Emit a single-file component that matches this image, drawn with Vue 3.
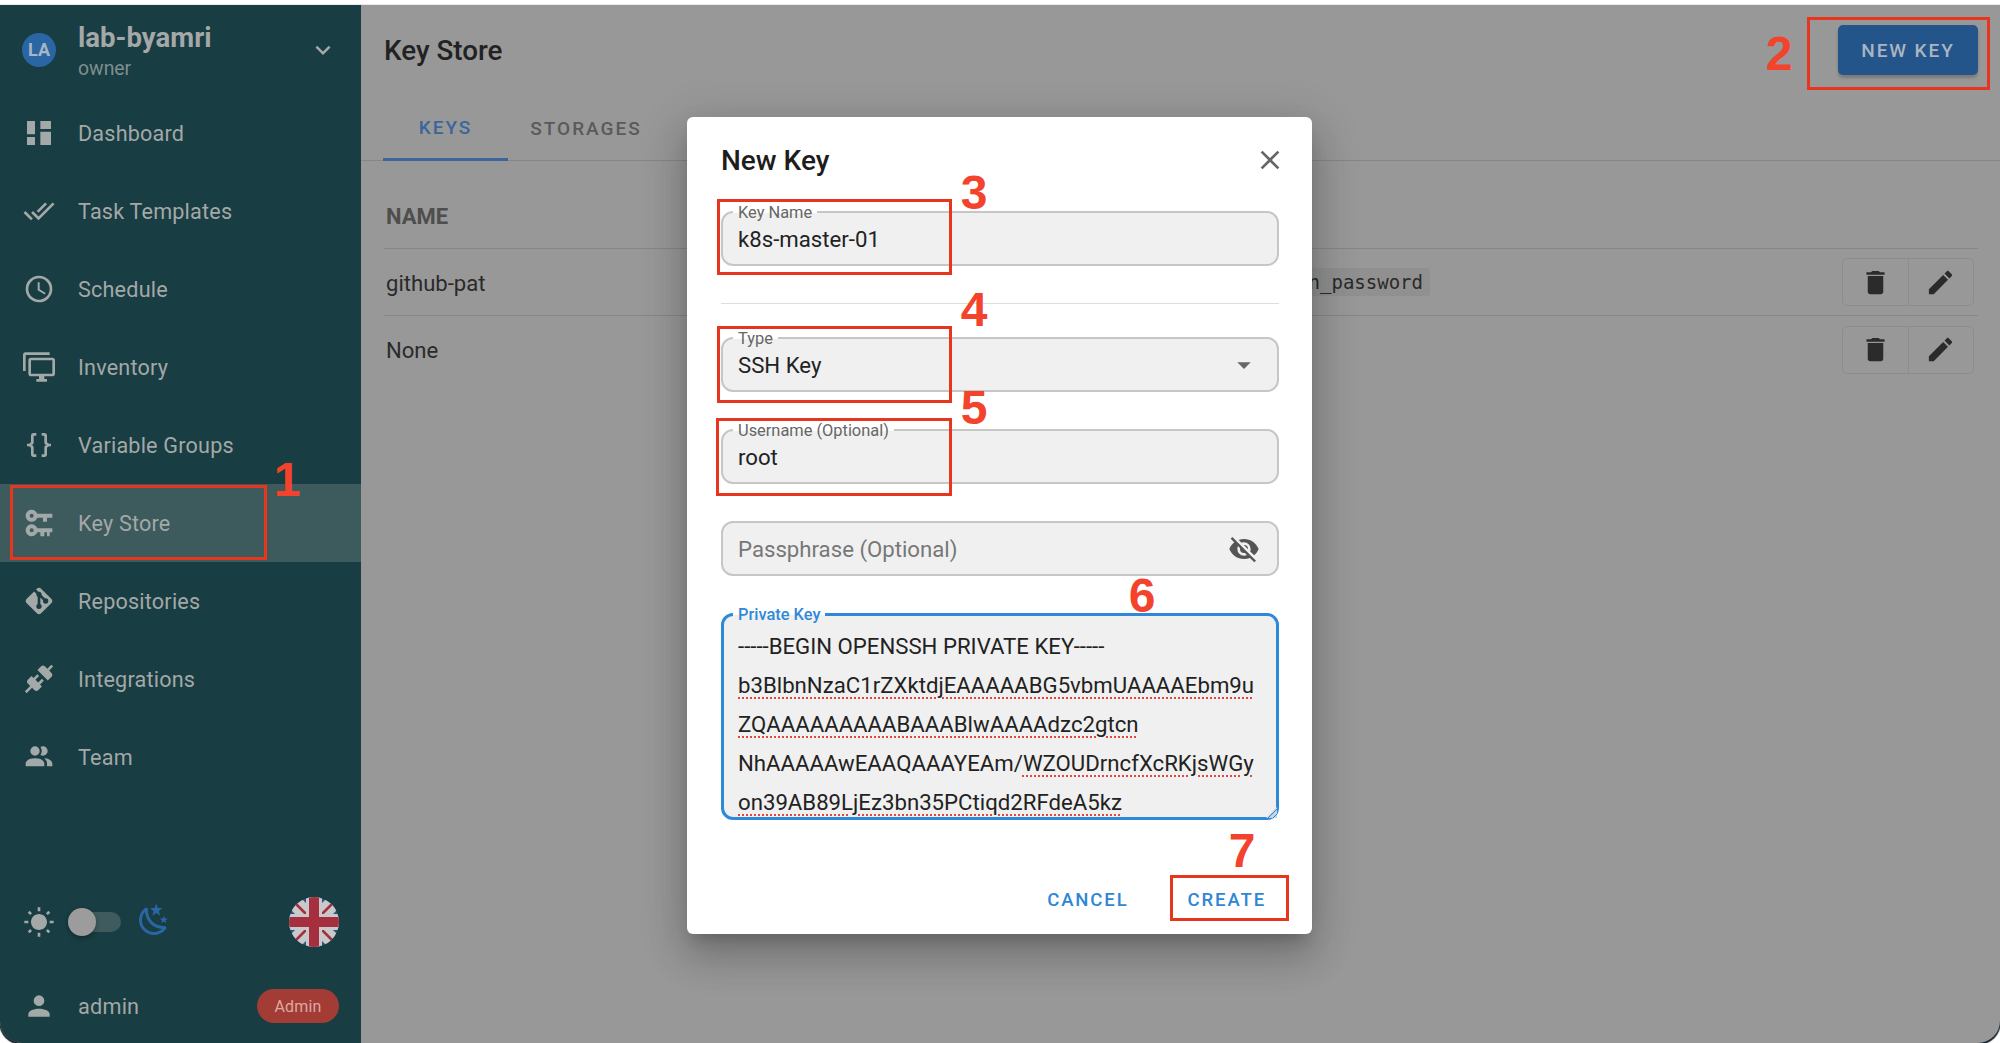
<script setup>
const icons = {
  dashboard: 'M13,3V9H21V3M13,21H21V11H13M3,21H9V15H3M3,13H9V3H3V13Z',
  checkAll: 'M0.41,13.41L6,19L7.41,17.58L1.83,12M22.24,5.58L11.66,16.17L7.5,12L6.07,13.41L11.66,19L23.66,7M18,7L16.59,5.58L10.24,11.93L11.66,13.34L18,7Z',
  clock: 'M12,20A8,8 0 0,0 20,12A8,8 0 0,0 12,4A8,8 0 0,0 4,12A8,8 0 0,0 12,20M12,2A10,10 0 0,1 22,12A10,10 0 0,1 12,22C6.47,22 2,17.5 2,12A10,10 0 0,1 12,2M12.5,7V12.25L17,14.92L16.25,16.15L11,13V7H12.5Z',
  monitors: 'M22,17V7H6V17H22M22,5A2,2 0 0,1 24,7V17C24,18.11 23.1,19 22,19H16V21H18V23H10V21H12V19H6C4.89,19 4,18.11 4,17V7A2,2 0 0,1 6,5H22M2,3V15H0V3A2,2 0 0,1 2,1H20V3H2Z',
  braces: 'M8,3A2,2 0 0,0 6,5V9A2,2 0 0,1 4,11H3V13H4A2,2 0 0,1 6,15V19A2,2 0 0,0 8,21H10V19H8V14A2,2 0 0,0 6,12A2,2 0 0,0 8,10V5H10V3M16,3A2,2 0 0,1 18,5V9A2,2 0 0,0 20,11H21V13H20A2,2 0 0,0 18,15V19A2,2 0 0,1 16,21H14V19H16V14A2,2 0 0,1 18,12A2,2 0 0,1 16,10V5H14V3H16Z',
  keys: 'M6.5,2C8.46,2 10.13,3.25 10.74,5H22V8H18V11H15V8H10.74C10.13,9.75 8.46,11 6.5,11C4,11 2,9 2,6.5C2,4 4,2 6.5,2M6.5,5A1.5,1.5 0 0,0 5,6.5A1.5,1.5 0 0,0 6.5,8A1.5,1.5 0 0,0 8,6.5A1.5,1.5 0 0,0 6.5,5M6.5,13C8.46,13 10.13,14.25 10.74,16H22V19H20V22H18V19H16V22H13V19H10.74C10.13,20.75 8.46,22 6.5,22C4,22 2,20 2,17.5C2,15 4,13 6.5,13M6.5,16A1.5,1.5 0 0,0 5,17.5A1.5,1.5 0 0,0 6.5,19A1.5,1.5 0 0,0 8,17.5A1.5,1.5 0 0,0 6.5,16Z',
  git: 'M2.6,10.59L8.38,4.8L10.07,6.5C9.83,7.35 10.22,8.28 11,8.73V14.27C10.4,14.61 10,15.26 10,16A2,2 0 0,0 12,18A2,2 0 0,0 14,16C14,15.26 13.6,14.61 13,14.27V9.41L15.07,11.5C15,11.65 15,11.82 15,12A2,2 0 0,0 17,14A2,2 0 0,0 19,12A2,2 0 0,0 17,10C16.82,10 16.65,10 16.5,10.07L13.93,7.5C14.19,6.57 13.71,5.55 12.78,5.16C12.35,5 11.9,4.96 11.5,5.07L9.8,3.38L10.59,2.6C11.37,1.81 12.63,1.81 13.41,2.6L21.4,10.59C22.19,11.37 22.19,12.63 21.4,13.41L13.41,21.4C12.63,22.19 11.37,22.19 10.59,21.4L2.6,13.41C1.81,12.63 1.81,11.37 2.6,10.59Z',
  connection: 'M21.4 7.5C22.2 8.3 22.2 9.6 21.4 10.3L18.6 13.1L10.8 5.3L13.6 2.5C14.4 1.7 15.7 1.7 16.4 2.5L18.2 4.3L21.2 1.3L22.6 2.7L19.6 5.7L21.4 7.5M15.6 13.3L14.2 11.9L11.4 14.7L9.3 12.6L12.1 9.8L10.7 8.4L7.9 11.2L6.4 9.8L3.6 12.6C2.8 13.4 2.8 14.7 3.6 15.4L5.4 17.2L1.4 21.2L2.8 22.6L6.8 18.6L8.6 20.4C9.4 21.2 10.7 21.2 11.4 20.4L14.2 17.6L12.8 16.2L15.6 13.3Z',
  team: 'M16 17V19H2V17S2 13 9 13 16 17 16 17M12.5 7.5A3.5 3.5 0 1 0 9 11A3.5 3.5 0 0 0 12.5 7.5M15.94 13A5.32 5.32 0 0 1 18 17V19H22V17S22 13.37 15.94 13M15 4A3.39 3.39 0 0 0 13.07 4.59A5 5 0 0 1 13.07 10.41A3.39 3.39 0 0 0 15 11A3.5 3.5 0 0 0 15 4Z',
  account: 'M12,4A4,4 0 0,1 16,8A4,4 0 0,1 12,12A4,4 0 0,1 8,8A4,4 0 0,1 12,4M12,14C16.42,14 20,15.79 20,18V20H4V18C4,15.79 7.58,14 12,14Z',
  chevron: 'M7.41,8.58L12,13.17L16.59,8.58L18,10L12,16L6,10L7.41,8.58Z',
  close: 'M19,6.41L17.59,5L12,10.59L6.41,5L5,6.41L10.59,12L5,17.59L6.41,19L12,13.41L17.59,19L19,17.59L13.41,12L19,6.41Z',
  menuDown: 'M7,10L12,15L17,10H7Z',
  eyeOff: 'M11.83,9L15,12.16C15,12.11 15,12.05 15,12A3,3 0 0,0 12,9C11.94,9 11.89,9 11.83,9M7.53,9.8L9.08,11.35C9.03,11.56 9,11.77 9,12A3,3 0 0,0 12,15C12.22,15 12.44,14.97 12.65,14.92L14.2,16.47C13.53,16.8 12.79,17 12,17A5,5 0 0,1 7,12C7,11.21 7.2,10.47 7.53,9.8M2,4.27L4.28,6.55L4.73,7C3.08,8.3 1.78,10 1,12C2.73,16.39 7,19.5 12,19.5C13.55,19.5 15.03,19.2 16.38,18.66L16.81,19.08L19.73,22L21,20.73L3.27,3M12,7A5,5 0 0,1 17,12C17,12.64 16.87,13.26 16.64,13.82L19.57,16.75C21.07,15.5 22.27,13.86 23,12C21.27,7.61 17,4.5 12,4.5C10.6,4.5 9.26,4.75 8,5.2L10.17,7.35C10.74,7.13 11.35,7 12,7Z',
  trash: 'M19,4H15.5L14.5,3H9.5L8.5,4H5V6H19M6,19A2,2 0 0,0 8,21H16A2,2 0 0,0 18,19V7H6V19Z',
  pencil: 'M20.71,7.04C21.1,6.65 21.1,6 20.71,5.63L18.37,3.29C18,2.9 17.35,2.9 16.96,3.29L15.12,5.12L18.87,8.87M3,17.25V21H6.75L17.81,9.93L14.06,6.18L3,17.25Z',
  sun: 'M3.55,19.09L4.96,20.5L6.76,18.71L5.34,17.29M12,6C8.69,6 6,8.69 6,12S8.69,18 12,18 18,15.31 18,12C18,8.68 15.31,6 12,6M20,13H23V11H20M17.24,18.71L19.04,20.5L20.45,19.09L18.66,17.29M20.45,5L19.04,3.6L17.24,5.39L18.66,6.81M13,1H11V4H13M6.76,5.39L4.96,3.6L3.55,5L5.34,6.81L6.76,5.39M1,13H4V11H1M13,20H11V23H13',
  moon: 'M17.75,4.09L15.22,6.03L16.13,9.09L13.5,7.28L10.87,9.09L11.78,6.03L9.25,4.09L12.44,4L13.5,1L14.56,4L17.75,4.09M21.25,11L19.61,12.25L20.2,14.23L18.5,13.06L16.8,14.23L17.39,12.25L15.75,11L17.81,10.95L18.5,9L19.19,10.95L21.25,11M18.97,15.95C19.8,15.87 20.69,17.05 20.16,17.8C19.84,18.25 19.5,18.67 19.08,19.07C15.17,23 8.84,23 4.94,19.07C1.03,15.17 1.03,8.83 4.94,4.93C5.34,4.53 5.76,4.17 6.21,3.85C6.96,3.32 8.14,4.21 8.06,5.04C7.79,7.9 8.75,10.87 10.95,13.06C13.14,15.26 16.1,16.22 18.97,15.95M17.33,17.97C14.5,17.81 11.7,16.64 9.53,14.5C7.36,12.31 6.2,9.5 6.04,6.68C3.23,9.82 3.34,14.64 6.35,17.66C9.37,20.67 14.19,20.78 17.33,17.97Z'
}

const nav = [
  { label: 'Dashboard', icon: icons.dashboard },
  { label: 'Task Templates', icon: icons.checkAll },
  { label: 'Schedule', icon: icons.clock },
  { label: 'Inventory', icon: icons.monitors },
  { label: 'Variable Groups', icon: icons.braces },
  { label: 'Key Store', icon: icons.keys, active: true },
  { label: 'Repositories', icon: icons.git },
  { label: 'Integrations', icon: icons.connection },
  { label: 'Team', icon: icons.team }
]

const rows = [
  { name: 'github-pat', code: 'login_password' },
  { name: 'None', code: '' }
]

const keyLines = [
  [{ t: '-----BEGIN OPENSSH PRIVATE KEY-----' }],
  [{ t: 'b3BlbnNzaC1rZXktdjEAAAAABG5vbmUAAAAEbm9u', bad: true }],
  [{ t: 'ZQAAAAAAAAABAAABlwAAAAdzc2gtcn', bad: true }],
  [{ t: 'NhAAAAAwEAAQAAAYEAm/' }, { t: 'WZOUDrncfXcRKjsWGy', bad: true }],
  [{ t: 'on39AB89LjEz3bn35PCtiqd2RFdeA5kz', bad: true }]
]

const boxes = ['b1', 'b2', 'b3', 'b4', 'b5', 'b7']
const digits = [
  { n: 1, c: 'd1' }, { n: 2, c: 'd2' }, { n: 3, c: 'd3' }, { n: 4, c: 'd4' },
  { n: 5, c: 'd5' }, { n: 6, c: 'd6' }, { n: 7, c: 'd7' }
]
</script>

<template>
  <div class="page">
    <div class="window">
      <aside class="sidebar">
        <header class="project">
          <span class="avatar">LA</span>
          <div class="project-text">
            <div class="project-name">lab-byamri</div>
            <div class="project-role">owner</div>
          </div>
          <svg class="ic chevron" viewBox="0 0 24 24"><path :d="icons.chevron" /></svg>
        </header>

        <nav class="nav">
          <a v-for="item in nav" :key="item.label" class="nav-item" :class="{ active: item.active }">
            <svg class="ic nav-ic" viewBox="0 0 24 24"><path :d="item.icon" /></svg>
            <span>{{ item.label }}</span>
          </a>
        </nav>

        <div class="foot">
          <div class="theme-row">
            <svg class="ic sun" viewBox="0 0 24 24"><path :d="icons.sun" /></svg>
            <span class="switch"><span class="thumb"></span></span>
            <svg class="ic moon" viewBox="0 0 24 24"><path :d="icons.moon" /></svg>
            <svg class="flag" viewBox="0 0 50 50">
              <defs><clipPath id="flagclip"><circle cx="25" cy="25" r="25" /></clipPath></defs>
              <g clip-path="url(#flagclip)">
                <rect width="50" height="50" fill="#2d5290" />
                <path d="M0 6L44 50M6 0L50 44M50 6L6 50M44 0L0 44" stroke="#c9c9c9" stroke-width="7" />
                <path d="M3 3L47 47M47 3L3 47" stroke="#a52f3f" stroke-width="2.5" />
                <rect x="0" y="17" width="50" height="16" fill="#c9c9c9" />
                <rect x="17" y="0" width="16" height="50" fill="#c9c9c9" />
                <rect x="0" y="20" width="50" height="10" fill="#a52f3f" />
                <rect x="20" y="0" width="10" height="50" fill="#a52f3f" />
              </g>
            </svg>
          </div>
          <div class="user-row">
            <svg class="ic nav-ic" viewBox="0 0 24 24"><path :d="icons.account" /></svg>
            <span class="user-name">admin</span>
            <span class="badge">Admin</span>
          </div>
        </div>
      </aside>

      <main class="main">
        <header class="topbar">
          <h1 class="title">Key Store</h1>
          <button class="new-key">NEW KEY</button>
        </header>

        <div class="tabs">
          <span class="tab on">KEYS</span>
          <span class="tab">STORAGES</span>
        </div>

        <section class="table">
          <div class="thead">NAME</div>
          <div v-for="row in rows" :key="row.name" class="trow">
            <span class="tname">{{ row.name }}</span>
            <code v-if="row.code" class="tcode">{{ row.code }}</code>
            <div class="actions">
              <span class="act"><svg class="ic act-ic" viewBox="0 0 24 24"><path :d="icons.trash" /></svg></span>
              <span class="act"><svg class="ic act-ic" viewBox="0 0 24 24"><path :d="icons.pencil" /></svg></span>
            </div>
          </div>
        </section>
      </main>

      <div class="dialog">
        <div class="dlg-head">
          <h2 class="dlg-title">New Key</h2>
          <svg class="ic dlg-close" viewBox="0 0 24 24"><path :d="icons.close" /></svg>
        </div>

        <div class="form">
          <div class="field">
            <label class="flabel">Key Name</label>
            <span class="fvalue">k8s-master-01</span>
          </div>
          <hr class="divider" />
          <div class="field">
            <label class="flabel">Type</label>
            <span class="fvalue">SSH Key</span>
            <svg class="ic fend arrow" viewBox="0 0 24 24"><path :d="icons.menuDown" /></svg>
          </div>
          <div class="field">
            <label class="flabel">Username (Optional)</label>
            <span class="fvalue">root</span>
          </div>
          <div class="field">
            <span class="fvalue placeholder">Passphrase (Optional)</span>
            <svg class="ic fend eye" viewBox="0 0 24 24"><path :d="icons.eyeOff" /></svg>
          </div>
          <div class="field area">
            <label class="flabel blue">Private Key</label>
            <div class="area-text">
              <div v-for="(line, i) in keyLines" :key="i" class="area-line">
                <span v-for="(part, j) in line" :key="j" :class="{ bad: part.bad }">{{ part.t }}</span>
              </div>
            </div>
            <svg class="grip" viewBox="0 0 12 12">
              <path d="M12 1L1 12H12Z" fill="#bcd6ee" />
              <path d="M12 3L3 12M12 8L8 12" stroke="#4d7fae" stroke-width="1" />
            </svg>
          </div>
        </div>

        <div class="dlg-actions">
          <button class="text-btn">CANCEL</button>
          <button class="text-btn">CREATE</button>
        </div>
      </div>
    </div>

    <div class="notes">
      <span v-for="b in boxes" :key="b" class="box" :class="b"></span>
      <span v-for="d in digits" :key="d.n" class="digit" :class="d.c">{{ d.n }}</span>
    </div>
  </div>
</template>

<style>
html, body { margin: 0; background: #fff; }
</style>

<style scoped>
.page {
  position: relative;
  width: 2000px;
  height: 1043px;
  padding-top: 5px;
  box-sizing: border-box;
  overflow: hidden;
  background: #fff;
  font-family: Roboto, "Liberation Sans", sans-serif;
}
.window {
  position: relative;
  display: flex;
  height: 1038px;
  background: #989898;
  border-radius: 0 0 22px 22px;
  box-shadow: 0 1px 1px 1px #15212a;
  overflow: hidden;
}
.ic { display: block; fill: currentColor; flex: none; }

.sidebar {
  width: 361px;
  flex: none;
  display: flex;
  flex-direction: column;
  background: #183d42;
  color: #a3a8a8;
}
.project {
  height: 89px;
  flex: none;
  display: flex;
  align-items: center;
  padding: 0 23px 0 22px;
  box-sizing: border-box;
}
.avatar {
  width: 34px;
  height: 34px;
  border-radius: 50%;
  background: #2a66a3;
  color: #a5b6c6;
  font-size: 18px;
  font-weight: 700;
  display: flex;
  align-items: center;
  justify-content: center;
  flex: none;
}
.project-text { flex: 1; margin-left: 22px; padding-top: 4px; }
.project-name {
  font-size: 27.6px;
  font-weight: 700;
  line-height: 32px;
  color: #a4a8a8;
  margin-top: -1px;
}
.project-role { font-size: 19.4px; line-height: 24px; color: #7e8f91; margin-top: 3px; }
.chevron { width: 30px; height: 30px; color: #a3a8a8; }

.nav { flex: 1; }
.nav-item {
  height: 78px;
  display: flex;
  align-items: center;
  gap: 23px;
  padding-left: 23px;
  font-size: 21.6px;
  letter-spacing: 0.2px;
}
.nav-item.active { background: #3d5a5d; }
.nav-ic { width: 32px; height: 32px; color: #a3a8a8; }

.foot { flex: none; padding-bottom: 3px; }
.theme-row {
  height: 68px;
  display: flex;
  align-items: center;
  padding: 0 22px 0 23px;
  margin-bottom: 16px;
}
.sun { width: 32px; height: 32px; }
.switch {
  position: relative;
  width: 46px;
  height: 20px;
  margin-left: 20px;
  border-radius: 10px;
  background: #3f5b5e;
}
.thumb {
  position: absolute;
  left: -7px;
  top: -4px;
  width: 28px;
  height: 28px;
  border-radius: 50%;
  background: #9c9c9c;
  box-shadow: 0 2px 5px rgba(0, 0, 0, 0.3);
}
.moon { width: 36px; height: 36px; margin-left: 15px; margin-top: -5px; color: #2a66a3; }
.flag { width: 50px; height: 50px; margin-left: auto; }
.user-row {
  height: 68px;
  display: flex;
  align-items: center;
  padding: 0 22px 0 23px;
  font-size: 21.7px;
  letter-spacing: 0.2px;
}
.user-name { margin-left: 23px; }
.badge {
  margin-left: auto;
  width: 82px;
  height: 34px;
  border-radius: 17px;
  background: #a33c34;
  color: #dca9a3;
  font-size: 16px;
  display: flex;
  align-items: center;
  justify-content: center;
}

.main { flex: 1; display: flex; flex-direction: column; min-width: 0; color: #2a2a2a; }
.topbar {
  height: 90px;
  flex: none;
  display: flex;
  align-items: center;
  justify-content: space-between;
  padding: 0 22px 0 23px;
}
.title { margin: 0; font-size: 27.8px; font-weight: 500; color: #222; }
.new-key {
  width: 140px;
  height: 50px;
  border: 0;
  border-radius: 5px;
  background: #23548a;
  color: #a9b5c2;
  font: 500 19px Roboto, sans-serif;
  letter-spacing: 1.9px;
  box-shadow: 0 3px 3px rgba(0, 0, 0, 0.2);
}
.tabs {
  height: 66px;
  flex: none;
  display: flex;
  padding-left: 22px;
  border-bottom: 1px solid #868686;
  box-sizing: border-box;
}
.tab {
  width: 125px;
  display: flex;
  align-items: center;
  justify-content: center;
  padding-top: 2px;
  box-sizing: border-box;
  font-size: 19px;
  font-weight: 500;
  letter-spacing: 2px;
  color: #5a5a5a;
}
.tab + .tab { width: 156px; }
.tab.on { color: #3c669b; border-bottom: 3px solid #3c669b; margin-bottom: -1px; }

.table { margin: 22px 22px 0 23px; }
.thead {
  height: 66px;
  display: flex;
  align-items: center;
  padding: 2px 0 0 2px;
  box-sizing: border-box;
  border-bottom: 1px solid #868686;
  font-size: 22px;
  font-weight: 700;
  color: #4e4e4e;
}
.trow {
  height: 67px;
  display: flex;
  align-items: center;
  padding-left: 2px;
  box-sizing: border-box;
  border-bottom: 1px solid #868686;
  font-size: 22.1px;
}
.trow:last-child { border-bottom: 0; }
.tname { flex: 1; padding-top: 1px; }
.tcode {
  margin-right: 412px;
  padding: 3px 7px;
  border-radius: 4px;
  background: #909090;
  font: 19px "DejaVu Sans Mono", monospace;
  color: #2a2a2a;
}
.actions {
  width: 132px;
  height: 48px;
  margin-right: 4px;
  display: flex;
  border: 1px solid #8c8c8c;
  border-radius: 5px;
  box-sizing: border-box;
}
.act { flex: 1; display: flex; align-items: center; justify-content: center; }
.act + .act { border-left: 1px solid #8c8c8c; }
.act-ic { width: 31px; height: 31px; color: #2b2b2b; }

.dialog {
  position: absolute;
  left: 687px;
  top: 112px;
  width: 625px;
  height: 817px;
  box-sizing: border-box;
  padding: 22px 33px 0 34px;
  background: #fff;
  border-radius: 6px;
  box-shadow: 0 11px 15px -7px rgba(0, 0, 0, 0.2), 0 24px 38px 3px rgba(0, 0, 0, 0.14), 0 9px 46px 8px rgba(0, 0, 0, 0.12);
}
.dlg-head { height: 42px; display: flex; align-items: center; justify-content: space-between; }
.dlg-title { margin: 0; font-size: 28px; font-weight: 500; color: #1d1d1d; }
.dlg-close { width: 32px; height: 32px; margin-right: -7px; color: #666; }

.form { margin-top: 30px; display: flex; flex-direction: column; gap: 37px; }
.field {
  position: relative;
  height: 55px;
  flex: none;
  display: flex;
  align-items: center;
  padding: 0 15px;
  box-sizing: border-box;
  background: #f0f0f0;
  border: 2px solid #c6c6c6;
  border-radius: 12px;
  font-size: 22.2px;
  color: #222;
}
.flabel {
  position: absolute;
  left: 10px;
  top: -9px;
  padding: 0 5px;
  line-height: 18px;
  font-size: 16.4px;
  color: #666;
  background: linear-gradient(#fff 50%, #f0f0f0 50%);
}
.placeholder { color: #777; }
.fend { position: absolute; right: 17px; top: 50%; width: 32px; height: 32px; margin-top: -16px; }
.arrow { color: #666; }
.eye { color: #555; }
.divider { margin: 0 0 -4px; border: 0; height: 1px; background: #dedede; }

.area {
  height: 207px;
  display: block;
  padding: 0 14px;
  border: 3px solid #2f89d9;
}
.blue { color: #2f89d9; top: -10px; left: 9px; font-weight: 500; }
.area-text { height: 201px; overflow: hidden; padding-top: 11px; box-sizing: border-box; }
.area-line { height: 39px; line-height: 39px; white-space: nowrap; }
.bad {
  text-decoration: underline dotted #e2463c;
  text-decoration-thickness: 2px;
  text-underline-offset: 4px;
}
.grip { position: absolute; right: -1px; bottom: -1px; width: 12px; height: 12px; }

.dlg-actions {
  margin-top: 55px;
  height: 50px;
  display: flex;
  justify-content: flex-end;
  align-items: center;
  gap: 59px;
  padding-right: 13px;
}
.text-btn {
  padding: 0;
  border: 0;
  background: none;
  color: #2f86d6;
  font: 500 18.5px Roboto, sans-serif;
  letter-spacing: 1.9px;
}

.notes { position: absolute; inset: 0; pointer-events: none; }
.box { position: absolute; box-sizing: border-box; border: 3px solid #e8351d; }
.b1 { left: 10px; top: 485px; width: 257px; height: 75px; }
.b2 { left: 1807px; top: 17px; width: 183px; height: 73px; }
.b3 { left: 717px; top: 199px; width: 235px; height: 76px; }
.b4 { left: 717px; top: 326px; width: 235px; height: 77px; }
.b5 { left: 716px; top: 418px; width: 236px; height: 78px; }
.b7 { left: 1170px; top: 875px; width: 119px; height: 46px; }
.digit {
  position: absolute;
  transform: translate(-50%, -50%);
  font: 700 48px/1 "Liberation Sans", Arial, sans-serif;
  color: #f4432c;
}
.d1 { left: 287px; top: 480px; }
.d2 { left: 1779px; top: 54px; }
.d3 { left: 974px; top: 193px; }
.d4 { left: 974px; top: 310px; }
.d5 { left: 974px; top: 408px; }
.d6 { left: 1142px; top: 596px; }
.d7 { left: 1242px; top: 851px; }
</style>
